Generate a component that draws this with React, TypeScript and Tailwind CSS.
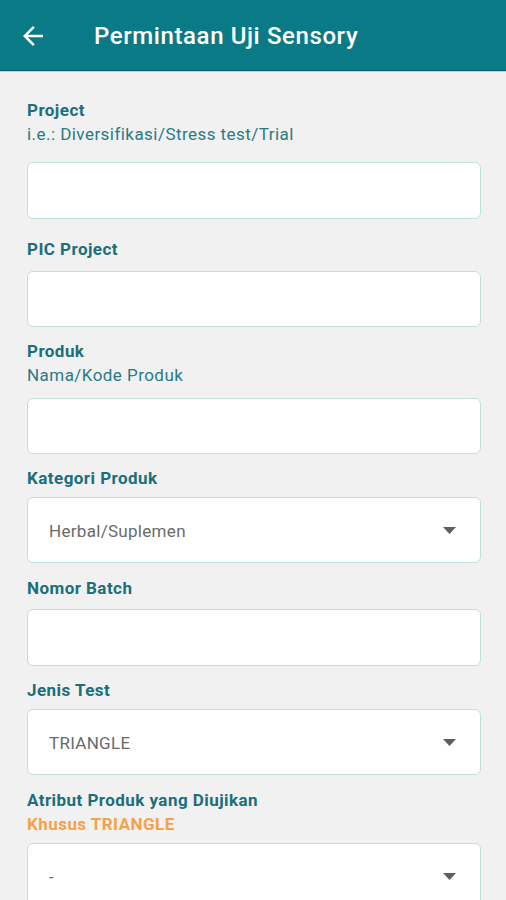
import React from 'react';

const font = { fontFamily: 'Roboto, "Noto Sans", sans-serif' };

const Label: React.FC<{ text: string; className?: string }> = ({ text, className = '' }) => (
  <div className={`text-[17px] leading-[24px] font-bold tracking-[0.45px] text-[#1b6f7b] ${className}`}>
    {text}
  </div>
);

const Sub: React.FC<{ text: string; orange?: boolean }> = ({ text, orange }) => (
  <div
    className={`text-[17px] leading-[24px] tracking-[0.45px] ${
      orange ? 'font-bold text-[#f6a148]' : 'text-[#2a7a83]'
    }`}
  >
    {text}
  </div>
);

const Input: React.FC<{ className?: string; h?: string }> = ({ className = '', h = 'h-[56px]' }) => (
  <div className={`${h} bg-white border border-[#bfe2d8] rounded-[6px] ${className}`} />
);

const Select: React.FC<{ value: string; className?: string }> = ({ value, className = '' }) => (
  <div
    className={`h-[66px] bg-white border border-[#bfe2d8] rounded-[6px] flex items-center justify-between pl-[21px] pr-[24px] ${className}`}
  >
    <span className="text-[17px] tracking-[0.3px] text-[#6a6a6a] mt-[3px]">{value}</span>
    <svg width="13" height="7" viewBox="0 0 13 7">
      <path d="M0 0h13L6.5 7z" fill="#5f5f5f" />
    </svg>
  </div>
);

export default function App() {
  return (
    <div className="w-[506px] h-[900px] overflow-hidden bg-[#f1f1f1]" style={font}>
      {/* Top bar */}
      <div className="h-[71px] bg-[#0b7a87] border-b border-[#07606b] shadow-[0_1px_0_#a9dbe3] flex items-center">
        <svg width="30" height="30" viewBox="0 0 24 24" className="ml-[18px] mt-[1px]">
          <path
            d="M20 11H7.83l5.59-5.59L12 4l-8 8 8 8 1.41-1.41L7.83 13H20v-2z"
            fill="#ffffff"
          />
        </svg>
        <h1 className="ml-[46px] mt-[2px] text-[24px] font-medium text-white tracking-[0.6px]">
          Permintaan Uji Sensory
        </h1>
      </div>

      {/* Form */}
      <div className="pl-[27px] pr-[25px] pt-[27px] flex flex-col">
        <Label text="Project" />
        <Sub text="i.e.: Diversifikasi/Stress test/Trial" />
        <Input className="mt-[16px]" h="h-[57px]" />

        <Label text="PIC Project" className="mt-[18px]" />
        <Input className="mt-[10px]" />

        <Label text="Produk" className="mt-[12px]" />
        <Sub text="Nama/Kode Produk" />
        <Input className="mt-[11px]" />

        <Label text="Kategori Produk" className="mt-[12px]" />
        <Select value="Herbal/Suplemen" className="mt-[7px]" />

        <Label text="Nomor Batch" className="mt-[13px]" />
        <Input className="mt-[9px]" h="h-[57px]" />

        <Label text="Jenis Test" className="mt-[12px]" />
        <Select value="TRIANGLE" className="mt-[7px]" />

        <Label text="Atribut Produk yang Diujikan" className="mt-[13px]" />
        <Sub text="Khusus TRIANGLE" orange />
        <Select value="-" className="mt-[7px]" />
      </div>
    </div>
  );
}
